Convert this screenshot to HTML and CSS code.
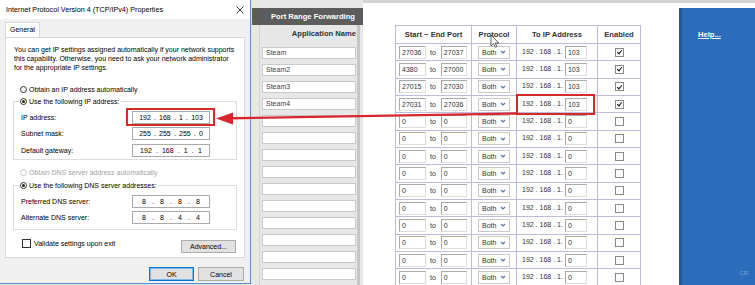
FILE: index.html
```html
<!DOCTYPE html>
<html lang="en">
<head>
    <meta charset="UTF-8">
    <title>Port Range Forwarding</title>
    <link rel="stylesheet" href="styles.css">
</head>
<body>
    <div class="screen">
        <div class="dialog">
            <div class="titlebar">
                <span>Internet Protocol Version 4 (TCP/IPv4) Properties</span>
                <svg class="close" width="8" height="8" viewBox="0 0 8 8"><path d="M0.5 0.5l7 7M7.5 0.5l-7 7"/></svg>
            </div>
            <div class="tabs"><span class="tab">General</span></div>
            <div class="panel">
                <p class="intro">You can get IP settings assigned automatically if your network supports<br>this capability. Otherwise, you need to ask your network administrator<br>for the appropriate IP settings.</p>
                <div class="radio first"><span class="dot"></span>Obtain an IP address automatically</div>
                <fieldset class="group ipgroup">
                    <legend class="radio"><span class="dot on"></span>Use the following IP address:</legend>
                    <div class="frow"><span class="flabel">IP address:</span><span class="hl"><span class="ipbox"><span>192</span><span>.</span><span>168</span><span>.</span><span>1</span><span>.</span><span>103</span></span></span></div>
                    <div class="frow"><span class="flabel">Subnet mask:</span><span class="ipbox"><span>255</span><span>.</span><span>255</span><span>.</span><span>255</span><span>.</span><span>0</span></span></div>
                    <div class="frow"><span class="flabel">Default gateway:</span><span class="ipbox"><span>192</span><span>.</span><span>168</span><span>.</span><span>1</span><span>.</span><span>1</span></span></div>
                </fieldset>
                <div class="radio off dnsauto"><span class="dot"></span>Obtain DNS server address automatically</div>
                <fieldset class="group dnsgroup">
                    <legend class="radio"><span class="dot on"></span>Use the following DNS server addresses:</legend>
                    <div class="frow"><span class="flabel">Preferred DNS server:</span><span class="ipbox"><span>8</span><span>.</span><span>8</span><span>.</span><span>8</span><span>.</span><span>8</span></span></div>
                    <div class="frow"><span class="flabel">Alternate DNS server:</span><span class="ipbox"><span>8</span><span>.</span><span>8</span><span>.</span><span>4</span><span>.</span><span>4</span></span></div>
                </fieldset>
                <div class="validate">
                    <span class="check"><span class="box"></span>Validate settings upon exit</span>
                    <span class="btn adv">Advanced...</span>
                </div>
            </div>
            <div class="buttons">
                <span class="btn ok">OK</span>
                <span class="btn">Cancel</span>
            </div>
        </div>

        <div class="router">
            <div class="appcol">
                <div class="apphead">Port Range Forwarding</div>
                <div class="applist">
                    <div class="appname">Application Name</div>
                    <div class="appin">Steam</div>
                    <div class="appin">Steam2</div>
                    <div class="appin">Steam3</div>
                    <div class="appin">Steam4</div>
                    <div class="appin"></div>
                    <div class="appin"></div>
                    <div class="appin"></div>
                    <div class="appin"></div>
                    <div class="appin"></div>
                    <div class="appin"></div>
                    <div class="appin"></div>
                    <div class="appin"></div>
                    <div class="appin"></div>
                    <div class="appin"></div>
                </div>
            </div>

            <div class="content">
                <div class="main">
                    <table class="fwd">
                        <tr><th class="c1">Start ~ End Port</th><th class="c2">Protocol</th><th class="c3">To IP Address</th><th class="c4">Enabled</th></tr>
                        <tr><td><div class="pr"><span class="tin w27">27036</span><span class="to">to</span><span class="tin w26">27037</span></div></td><td><span class="sel">Both<svg class="chev" viewBox="0 0 6 4"><path d="M1 1l2 2 2-2"/></svg></span></td><td class="ipc">192 . 168 . 1.<span class="tin w22">103</span></td><td><span class="cb on"></span></td></tr>
                        <tr><td><div class="pr"><span class="tin w27">4380</span><span class="to">to</span><span class="tin w26">27000</span></div></td><td><span class="sel">Both<svg class="chev" viewBox="0 0 6 4"><path d="M1 1l2 2 2-2"/></svg></span></td><td class="ipc">192 . 168 . 1.<span class="tin w22">103</span></td><td><span class="cb on"></span></td></tr>
                        <tr><td><div class="pr"><span class="tin w27">27015</span><span class="to">to</span><span class="tin w26">27030</span></div></td><td><span class="sel">Both<svg class="chev" viewBox="0 0 6 4"><path d="M1 1l2 2 2-2"/></svg></span></td><td class="ipc">192 . 168 . 1.<span class="tin w22">103</span></td><td><span class="cb on"></span></td></tr>
                        <tr><td><div class="pr"><span class="tin w27">27031</span><span class="to">to</span><span class="tin w26">27036</span></div></td><td><span class="sel">Both<svg class="chev" viewBox="0 0 6 4"><path d="M1 1l2 2 2-2"/></svg></span></td><td class="ipc mark">192 . 168 . 1.<span class="tin w22">103</span><span class="hl2"></span></td><td><span class="cb on"></span></td></tr>
                        <tr><td><div class="pr"><span class="tin w27">0</span><span class="to">to</span><span class="tin w26">0</span></div></td><td><span class="sel">Both<svg class="chev" viewBox="0 0 6 4"><path d="M1 1l2 2 2-2"/></svg></span></td><td class="ipc">192 . 168 . 1.<span class="tin w22">0</span></td><td><span class="cb"></span></td></tr>
                        <tr><td><div class="pr"><span class="tin w27">0</span><span class="to">to</span><span class="tin w26">0</span></div></td><td><span class="sel">Both<svg class="chev" viewBox="0 0 6 4"><path d="M1 1l2 2 2-2"/></svg></span></td><td class="ipc">192 . 168 . 1.<span class="tin w22">0</span></td><td><span class="cb"></span></td></tr>
                        <tr><td><div class="pr"><span class="tin w27">0</span><span class="to">to</span><span class="tin w26">0</span></div></td><td><span class="sel">Both<svg class="chev" viewBox="0 0 6 4"><path d="M1 1l2 2 2-2"/></svg></span></td><td class="ipc">192 . 168 . 1.<span class="tin w22">0</span></td><td><span class="cb"></span></td></tr>
                        <tr><td><div class="pr"><span class="tin w27">0</span><span class="to">to</span><span class="tin w26">0</span></div></td><td><span class="sel">Both<svg class="chev" viewBox="0 0 6 4"><path d="M1 1l2 2 2-2"/></svg></span></td><td class="ipc">192 . 168 . 1.<span class="tin w22">0</span></td><td><span class="cb"></span></td></tr>
                        <tr><td><div class="pr"><span class="tin w27">0</span><span class="to">to</span><span class="tin w26">0</span></div></td><td><span class="sel">Both<svg class="chev" viewBox="0 0 6 4"><path d="M1 1l2 2 2-2"/></svg></span></td><td class="ipc">192 . 168 . 1.<span class="tin w22">0</span></td><td><span class="cb"></span></td></tr>
                        <tr><td><div class="pr"><span class="tin w27">0</span><span class="to">to</span><span class="tin w26">0</span></div></td><td><span class="sel">Both<svg class="chev" viewBox="0 0 6 4"><path d="M1 1l2 2 2-2"/></svg></span></td><td class="ipc">192 . 168 . 1.<span class="tin w22">0</span></td><td><span class="cb"></span></td></tr>
                        <tr><td><div class="pr"><span class="tin w27">0</span><span class="to">to</span><span class="tin w26">0</span></div></td><td><span class="sel">Both<svg class="chev" viewBox="0 0 6 4"><path d="M1 1l2 2 2-2"/></svg></span></td><td class="ipc">192 . 168 . 1.<span class="tin w22">0</span></td><td><span class="cb"></span></td></tr>
                        <tr><td><div class="pr"><span class="tin w27">0</span><span class="to">to</span><span class="tin w26">0</span></div></td><td><span class="sel">Both<svg class="chev" viewBox="0 0 6 4"><path d="M1 1l2 2 2-2"/></svg></span></td><td class="ipc">192 . 168 . 1.<span class="tin w22">0</span></td><td><span class="cb"></span></td></tr>
                        <tr><td><div class="pr"><span class="tin w27">0</span><span class="to">to</span><span class="tin w26">0</span></div></td><td><span class="sel">Both<svg class="chev" viewBox="0 0 6 4"><path d="M1 1l2 2 2-2"/></svg></span></td><td class="ipc">192 . 168 . 1.<span class="tin w22">0</span></td><td><span class="cb"></span></td></tr>
                        <tr><td><div class="pr"><span class="tin w27">0</span><span class="to">to</span><span class="tin w26">0</span></div></td><td><span class="sel">Both<svg class="chev" viewBox="0 0 6 4"><path d="M1 1l2 2 2-2"/></svg></span></td><td class="ipc">192 . 168 . 1.<span class="tin w22">0</span></td><td><span class="cb"></span></td></tr>
                    </table>
                </div>
                <div class="side">
                    <a class="help">Help...</a>
                    <span class="cr">CR</span>
                </div>
            </div>
        </div>
    </div>

    <!-- annotation arrow and mouse pointer drawn over the screenshot -->
    <svg class="overlay" width="755" height="285" viewBox="0 0 755 285">
        <line x1="516" y1="113.5" x2="230" y2="118.3" stroke="#d8262e" stroke-width="2.4"/>
        <polygon points="216,118.5 233,112.5 233,124.5" fill="#d8262e"/>
        <path d="M491 35v11l2.6-2.4 1.7 3.7 1.6-.7-1.7-3.6h3.6z" fill="#fff" stroke="#222" stroke-width="0.7"/>
    </svg>
</body>
</html>
```

FILE: styles.css
```css
* {
    box-sizing: border-box;
}
body {
    margin: 0;
    width: 755px;
    height: 285px;
    overflow: hidden;
    position: relative;
    background: #dbe5ee;
    font-family: "Liberation Sans", Arial, sans-serif;
}
.screen {
    display: flex;
    height: 285px;
}

/* windows dialog */
.dialog {
    width: 251px;
    height: 284px;
    background: #f0f0f0;
    border-right: 1px solid #5b8fc7;
    border-bottom: 1px solid #5b8fc7;
    display: flex;
    flex-direction: column;
    font-size: 7px;
    color: #000;
}
.titlebar {
    height: 19px;
    background: #fff;
    display: flex;
    align-items: center;
    justify-content: space-between;
    padding: 0 6px 0 6px;
    font-size: 7.2px;
}
.close path {
    stroke: #222;
    stroke-width: 0.9;
}
.tabs {
    padding: 3px 0 0 5px;
    height: 18px;
}
.tab {
    display: inline-block;
    position: relative;
    z-index: 1;
    height: 15px;
    padding: 0 4px;
    line-height: 14px;
    background: #fff;
    border: 1px solid #d9d9d9;
    border-bottom: none;
}
.panel {
    height: 221px;
    margin: 0 5px;
    background: #fff;
    border: 1px solid #d9d9d9;
}
.intro {
    margin: 6.5px 0 0 8px;
    line-height: 9px;
}
.radio {
    display: flex;
    align-items: center;
    line-height: 9px;
    height: 9px;
}
.radio.first {
    margin: 13px 0 0 14px;
}
.radio.off {
    color: #a3a3a3;
}
.dot {
    width: 7px;
    height: 7px;
    margin-right: 2px;
    border: 1px solid #333;
    border-radius: 50%;
    background: #fff;
    display: inline-flex;
    align-items: center;
    justify-content: center;
}
.radio.off .dot {
    border-color: #c4c4c4;
}
.dot.on::after {
    content: "";
    width: 3px;
    height: 3px;
    border-radius: 50%;
    background: #222;
}
.group {
    margin: 3px 7px 0 7px;
    padding: 3.5px 0 0 6px;
    border: 1px solid #dcdcdc;
    min-width: 0;
}
.group legend {
    padding: 0 1px 0 0;
}
.dnsgroup {
    margin-top: 4px;
    padding-bottom: 3px;
}
.dnsauto {
    margin: 8px 0 0 14px;
}
.frow {
    display: flex;
    align-items: center;
    height: 16.5px;
    padding-left: 1px;
}
.flabel {
    width: 111px;
}
.ipbox {
    width: 78px;
    height: 13px;
    border: 1px solid #aaa;
    background: #fff;
    display: flex;
    align-items: center;
    justify-content: space-evenly;
    padding: 0 3px;
}
.hl {
    display: flex;
    border: 2px solid #d42a2a;
    padding: 1px 3px 0 4px;
    margin: -3px -5px -2px -6px;
}
.validate {
    display: flex;
    justify-content: space-between;
    align-items: flex-start;
    margin: 10px 8px 0 16px;
}
.check {
    display: flex;
    align-items: center;
    margin-top: -1px;
}
.box {
    width: 9px;
    height: 9px;
    border: 1px solid #333;
    background: #fff;
    margin-right: 3px;
}
.btn {
    display: inline-flex;
    align-items: center;
    justify-content: center;
    height: 13px;
    background: #e1e1e1;
    border: 1px solid #adadad;
}
.adv {
    width: 55px;
}
.buttons {
    display: flex;
    justify-content: flex-end;
    gap: 4px;
    padding: 9px 6px 0 0;
}
.buttons .btn {
    width: 46px;
    height: 14px;
}
.buttons .ok {
    width: 45px;
    border: 1px solid #0078d7;
    box-shadow: inset 0 0 0 1px #7fb8e8;
}

/* router page */
.router {
    flex: 1;
    display: flex;
    margin-left: 1px;
    color: #333;
}
.appcol {
    width: 111px;
    background: #e7e7e7;
    display: flex;
    flex-direction: column;
}
.apphead {
    margin-top: 8px;
    height: 17px;
    line-height: 17px;
    padding-right: 8px;
    background: #5c5c5c;
    color: #fff;
    font-size: 7.6px;
    font-weight: bold;
    text-align: right;
}
.applist {
    flex: 1;
    margin: 0 3px 0 7px;
    padding: 0 1px 0 2px;
    border-left: 1px solid #d3d3d3;
    border-right: 3px solid #c6c6c6;
}
.appname {
    height: 22px;
    line-height: 18px;
    text-align: right;
    font-size: 7.6px;
    font-weight: bold;
}
.appin {
    height: 12px;
    margin-bottom: 5px;
    padding-left: 3px;
    line-height: 10px;
    font-size: 7px;
    color: #444;
    background: #fff;
    border: 1px solid #c9c9c9;
}
.content {
    flex: 1;
    display: flex;
    background: #fff;
    border-top: 3px solid #d3d3d3;
}
.main {
    width: 316px;
    padding: 22px 0 0 32px;
}
.fwd {
    border-collapse: collapse;
    table-layout: fixed;
    width: 245px;
    font-size: 7px;
}
.fwd th,
.fwd td {
    border: 1px solid #bdbddb;
    padding: 0;
    text-align: center;
    white-space: nowrap;
}
.fwd th {
    height: 18px;
    font-size: 7.6px;
    font-weight: bold;
}
.fwd tr {
    height: 17.33px;
}
.c1 { width: 76px; }
.c2 { width: 45px; }
.c3 { width: 81px; }
.c4 { width: 43px; }
.pr {
    display: flex;
    align-items: center;
    padding-left: 3px;
}
.tin {
    display: inline-block;
    height: 13px;
    line-height: 11px;
    padding-left: 2px;
    text-align: left;
    background: #fff;
    border: 1px solid;
    border-color: #a9a9a9 #dedede #dedede #a9a9a9;
    vertical-align: middle;
}
.w27 { width: 27px; }
.w26 { width: 26px; }
.w22 { width: 22px; margin-left: 2px; }
.to {
    margin: 0 5px 0 4px;
}
.sel {
    display: inline-flex;
    align-items: center;
    justify-content: space-between;
    width: 32px;
    height: 13px;
    padding: 0 3px 0 3px;
    border: 1px solid #c9c9c9;
    vertical-align: middle;
}
.chev {
    width: 6px;
    height: 4px;
}
.chev path {
    fill: none;
    stroke: #5877ad;
    stroke-width: 1.2;
}
.fwd td.ipc {
    text-align: left;
    padding-left: 5px;
}
.mark {
    position: relative;
}
.hl2 {
    position: absolute;
    left: -1px;
    top: -2px;
    width: 79px;
    height: 21px;
    border: 2px solid #d42a2a;
}
.cb {
    display: inline-flex;
    align-items: center;
    justify-content: center;
    width: 9px;
    height: 9px;
    border: 1px solid #8a8a8a;
    background: #fff;
    vertical-align: middle;
}
.cb.on::after {
    content: "";
    width: 2px;
    height: 4px;
    margin-top: -1px;
    border-right: 1.4px solid #111;
    border-bottom: 1.4px solid #111;
    transform: rotate(40deg);
}
.side {
    flex: 1;
    margin-top: 5px;
    padding: 22px 0 0 16px;
    display: flex;
    flex-direction: column;
    background: #2b6cbb;
    border-left: 3px solid #1f58a3;
}
.help {
    color: #fff;
    font-size: 7.6px;
    font-weight: bold;
    text-decoration: underline;
    line-height: 9px;
}
.cr {
    margin: auto 7px 9px 0;
    align-self: flex-end;
    font-size: 6px;
    color: #7ea5d6;
}
.overlay {
    position: absolute;
    left: 0;
    top: 0;
    pointer-events: none;
}
```
